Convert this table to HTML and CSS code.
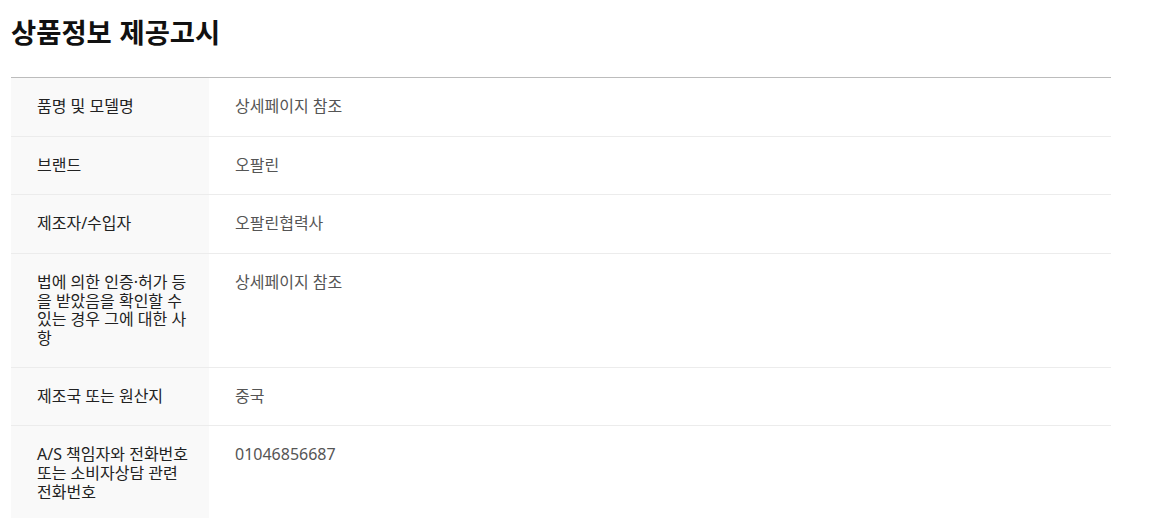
FILE: index.html
```html
<!DOCTYPE html>
<html lang="ko">
<head>
<meta charset="utf-8">
<title>상품정보 제공고시</title>
<link rel="stylesheet" href="styles.css">
</head>
<body>
<section class="notice">
  <h2 class="notice-title">상품정보 제공고시</h2>
  <table class="notice-table">
    <tbody>
      <tr>
        <th>품명 및 모델명</th>
        <td>상세페이지 참조</td>
      </tr>
      <tr>
        <th>브랜드</th>
        <td>오팔린</td>
      </tr>
      <tr>
        <th>제조자/수입자</th>
        <td>오팔린협력사</td>
      </tr>
      <tr>
        <th>법에 의한 인증·허가 등을 받았음을 확인할 수 있는 경우 그에 대한 사항</th>
        <td>상세페이지 참조</td>
      </tr>
      <tr>
        <th>제조국 또는 원산지</th>
        <td>중국</td>
      </tr>
      <tr>
        <th>A/S 책임자와 전화번호 또는 소비자상담 관련 전화번호</th>
        <td>01046856687</td>
      </tr>
    </tbody>
  </table>
</section>
</body>
</html>
```

FILE: styles.css
```css
html, body {
  margin: 0;
  padding: 0;
  background: #fff;
}

body {
  font-family: "Noto Sans", "Noto Sans CJK KR", sans-serif;
  color: #222;
}

.notice {
  width: 1100px;
  padding-left: 11px;
}

.notice-title {
  margin: 12px 0 27px 0;
  font-family: "Noto Sans CJK KR", sans-serif;
  font-size: 27.4px;
  line-height: 38px;
  font-weight: 700;
  color: #111;
}

.notice-table {
  width: 1100px;
  border-collapse: collapse;
  border-top: 1px solid #bcbcbc;
  table-layout: fixed;
}

.notice-table tr {
  border-bottom: 1px solid #ececec;
}

.notice-table th {
  width: 152px;
  padding: 19px 20px 19px 26px;
  background: #f9f9f9;
  text-align: left;
  vertical-align: top;
  font-weight: 400;
  font-size: 16px;
  line-height: 18.75px;
  color: #222;
}

.notice-table td {
  padding: 19px 26px;
  vertical-align: top;
  font-size: 16px;
  line-height: 19.6px;
  color: #555;
}
```
